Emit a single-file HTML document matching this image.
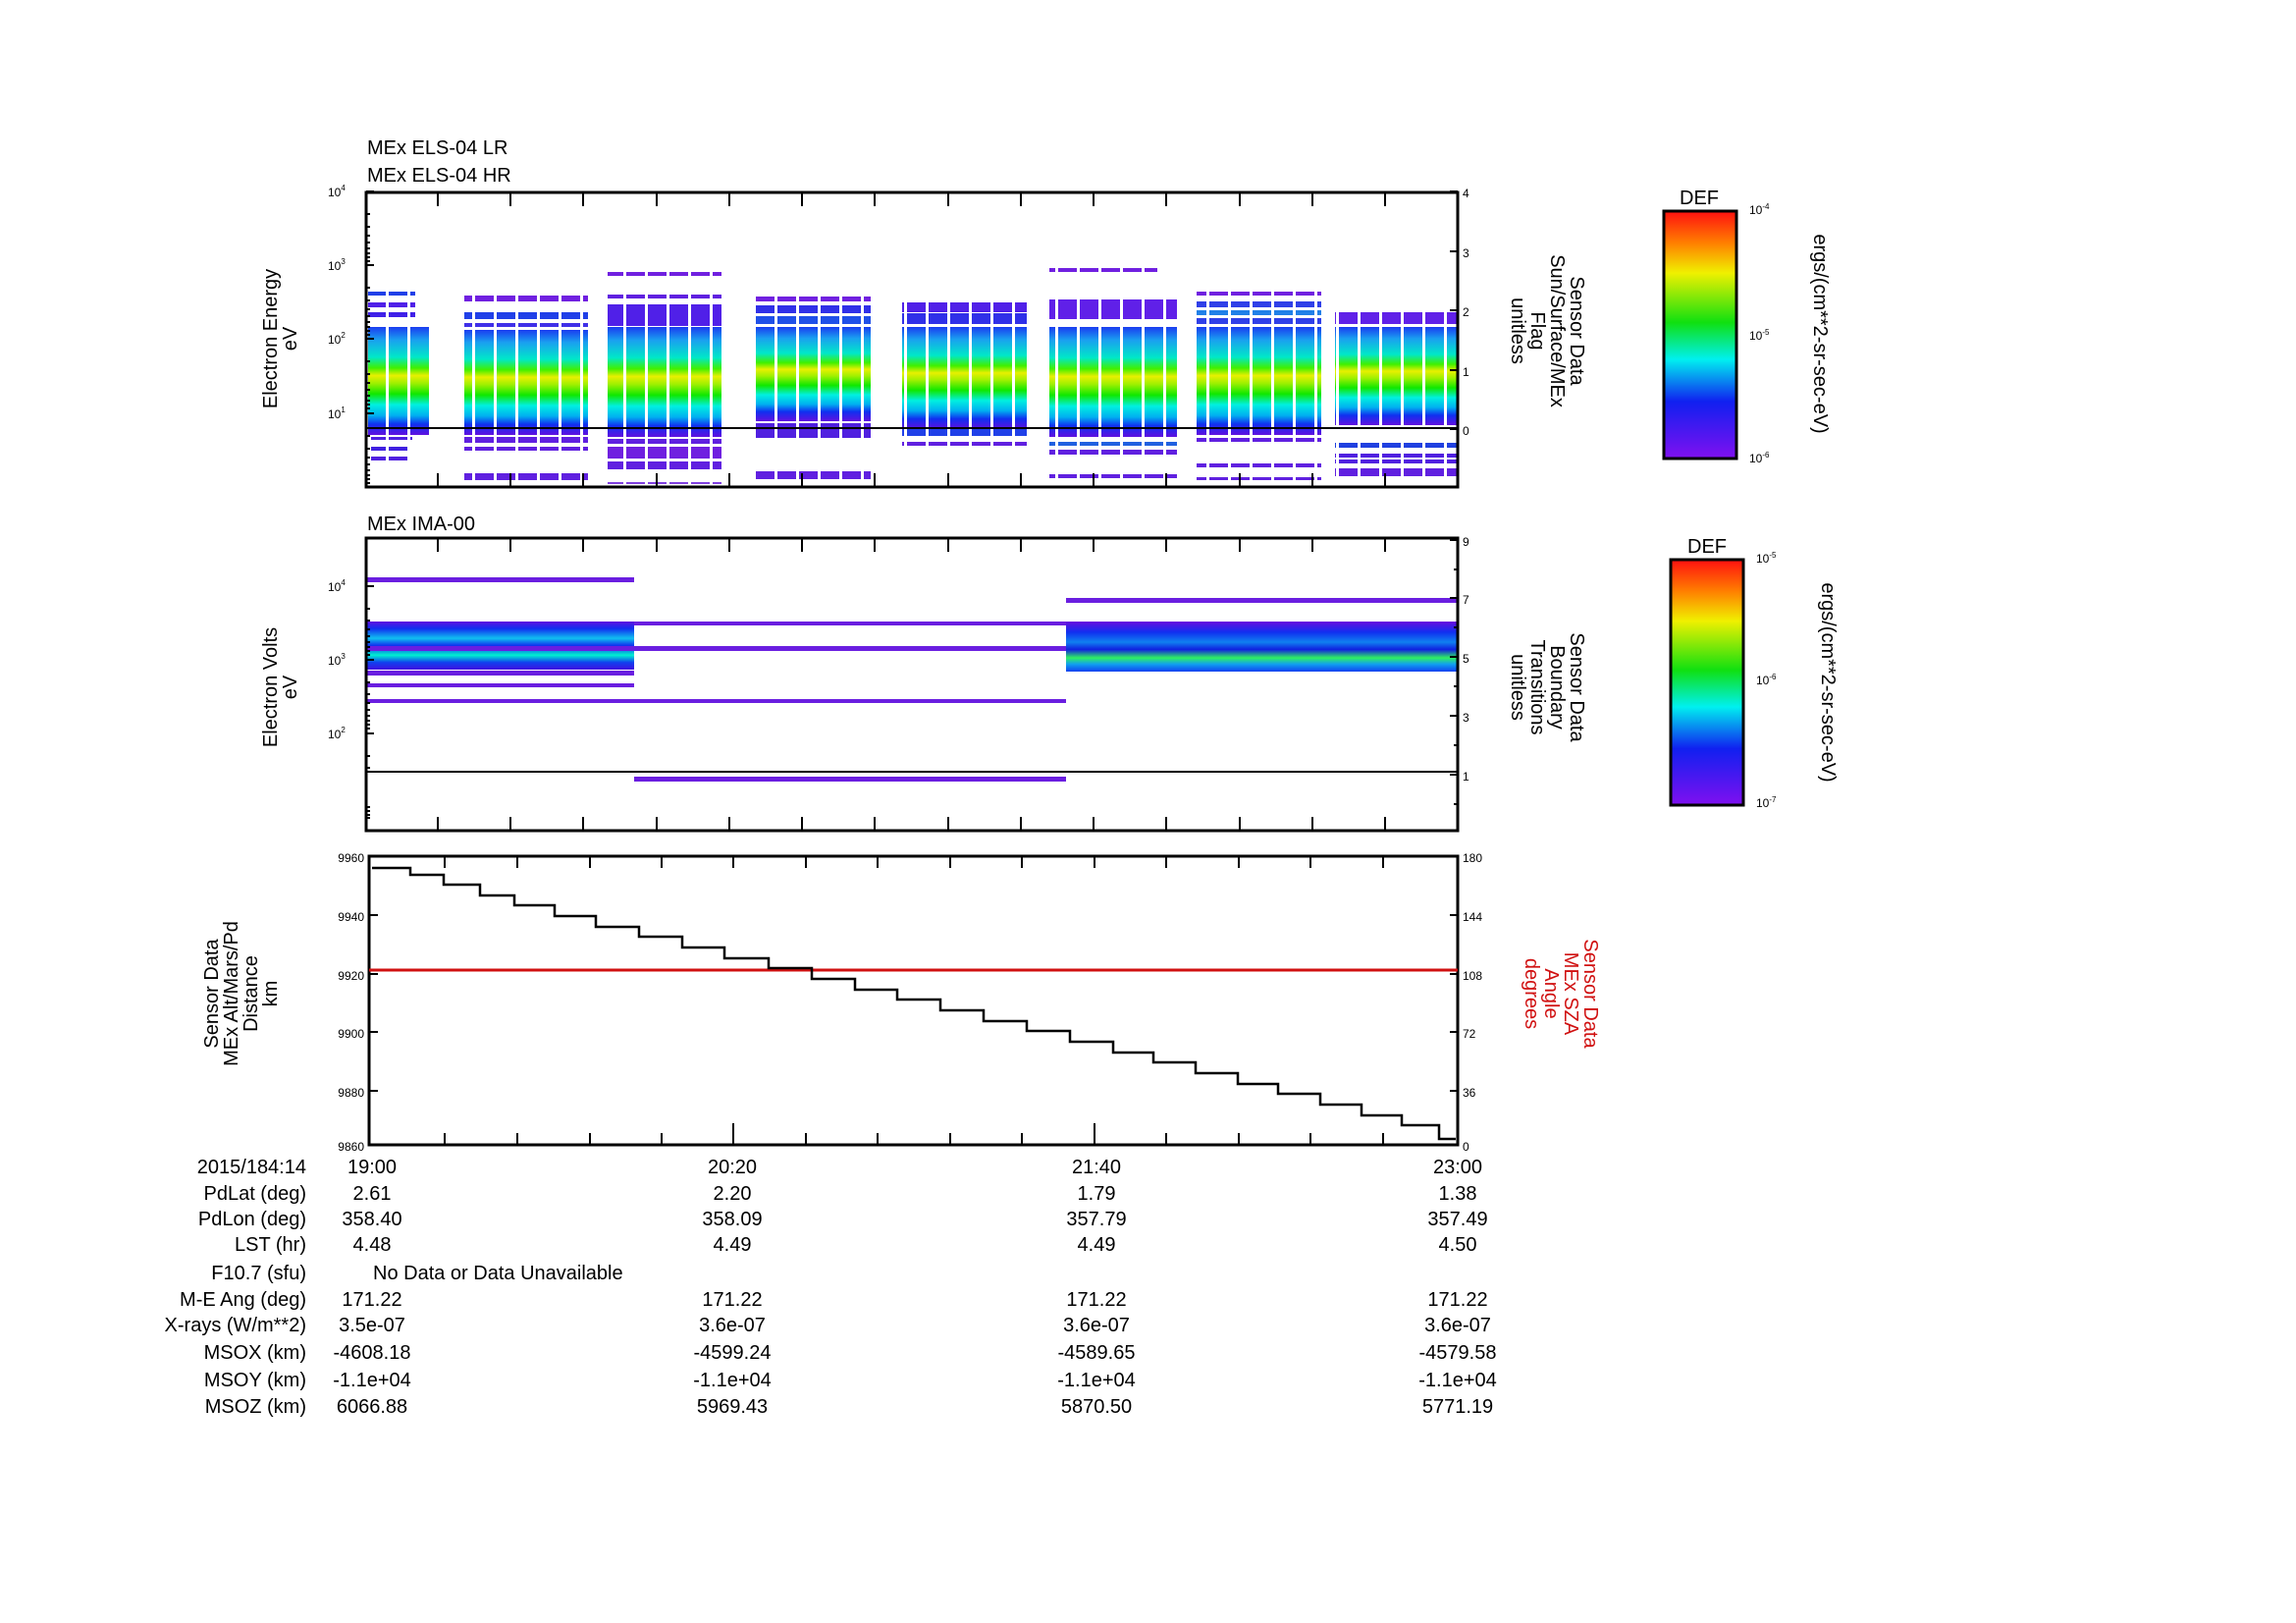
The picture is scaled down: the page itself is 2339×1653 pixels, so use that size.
<!DOCTYPE html>
<html><head><meta charset="utf-8"><style>
html,body{margin:0;padding:0;background:#fff}
svg{display:block}
text{font-family:"Liberation Sans Narrow","Liberation Sans",sans-serif;fill:#000}
.t{font-size:20px}
.s{font-size:12px}
.lab{font-family:"Liberation Sans",sans-serif;font-size:20px}
</style></head><body>
<svg width="2339" height="1653" viewBox="0 0 2339 1653" xmlns="http://www.w3.org/2000/svg">
<defs>
<linearGradient id="spec" x1="0" y1="0" x2="0" y2="1">
<stop offset="0" stop-color="#1a3cf0"/>
<stop offset="0.12" stop-color="#1aa0f0"/>
<stop offset="0.28" stop-color="#00e8c8"/>
<stop offset="0.38" stop-color="#40f000"/>
<stop offset="0.45" stop-color="#e8f000"/>
<stop offset="0.52" stop-color="#a0f000"/>
<stop offset="0.62" stop-color="#10e800"/>
<stop offset="0.72" stop-color="#00f0e0"/>
<stop offset="0.82" stop-color="#00b0f0"/>
<stop offset="0.9" stop-color="#1030f0"/>
<stop offset="1" stop-color="#6010e0"/>
</linearGradient>
<linearGradient id="cbar" x1="0" y1="0" x2="0" y2="1">
<stop offset="0" stop-color="#ff1010"/>
<stop offset="0.13" stop-color="#ff8000"/>
<stop offset="0.25" stop-color="#f0f000"/>
<stop offset="0.45" stop-color="#10e010"/>
<stop offset="0.6" stop-color="#00f0f0"/>
<stop offset="0.77" stop-color="#1020f0"/>
<stop offset="1" stop-color="#8010f0"/>
</linearGradient>
<linearGradient id="ima1" x1="0" y1="0" x2="0" y2="1">
<stop offset="0" stop-color="#6010e0"/>
<stop offset="0.15" stop-color="#1030f0"/>
<stop offset="0.35" stop-color="#10c0f0"/>
<stop offset="0.5" stop-color="#1030f0"/>
<stop offset="0.7" stop-color="#00f0d0"/>
<stop offset="0.85" stop-color="#1040f0"/>
<stop offset="1" stop-color="#4010e0"/>
</linearGradient>
<linearGradient id="ima2" x1="0" y1="0" x2="0" y2="1">
<stop offset="0" stop-color="#6010e0"/>
<stop offset="0.2" stop-color="#1030f0"/>
<stop offset="0.4" stop-color="#1080f0"/>
<stop offset="0.55" stop-color="#1020e0"/>
<stop offset="0.72" stop-color="#30f060"/>
<stop offset="0.85" stop-color="#10a0f0"/>
<stop offset="1" stop-color="#1040f0"/>
</linearGradient>
<pattern id="gaps" x="0" y="0" width="22" height="10" patternUnits="userSpaceOnUse">
<rect x="19" y="0" width="3" height="10" fill="#fff"/>
</pattern>
</defs>

<text class="t" x="374" y="157">MEx ELS-04 LR</text>
<text class="t" x="374" y="185">MEx ELS-04 HR</text>

<g id="blocks">
<rect x="375" y="333" width="65" height="110" fill="url(#spec)"/>
<rect x="375" y="308" width="48" height="5" fill="#5020e8"/><rect x="375" y="318" width="48" height="5" fill="#4020e8"/><rect x="375" y="297" width="48" height="4" fill="#2040e8"/>
<rect x="378" y="445" width="42" height="3" fill="#5020e0"/><rect x="378" y="455" width="40" height="4" fill="#4020e0"/><rect x="378" y="465" width="40" height="4" fill="#5020e0"/>
<rect x="473" y="336" width="126" height="107" fill="url(#spec)"/>
<rect x="473" y="301" width="126" height="6" fill="#7020e0"/><rect x="473" y="318" width="126" height="7" fill="#2040e8"/><rect x="473" y="329" width="126" height="4" fill="#4030e8"/>
<rect x="473" y="445" width="126" height="6" fill="#6020e0"/><rect x="473" y="455" width="126" height="4" fill="#6020e0"/><rect x="473" y="482" width="126" height="7" fill="#6020e0"/>
<rect x="619" y="333" width="116" height="112" fill="url(#spec)"/>
<rect x="619" y="277" width="116" height="4" fill="#7020e0"/><rect x="619" y="300" width="116" height="4" fill="#6020e0"/><rect x="619" y="310" width="116" height="22" fill="#5020e8"/>
<rect x="619" y="447" width="116" height="5" fill="#6020e0"/><rect x="619" y="455" width="116" height="12" fill="#7020e0"/><rect x="619" y="470" width="116" height="8" fill="#6020e0"/><rect x="619" y="491" width="116" height="2" fill="#8040e0"/>
<rect x="768" y="333" width="119" height="96" fill="url(#spec)"/>
<rect x="768" y="302" width="119" height="5" fill="#7020e0"/><rect x="768" y="311" width="119" height="8" fill="#3030e8"/><rect x="768" y="322" width="119" height="8" fill="#2050e8"/>
<rect x="768" y="431" width="119" height="15" fill="#5020e0"/><rect x="768" y="480" width="119" height="8" fill="#6020e0"/>
<rect x="919" y="333" width="127" height="104" fill="url(#spec)"/>
<rect x="919" y="308" width="127" height="10" fill="#5020e8"/><rect x="919" y="319" width="127" height="11" fill="#3030e8"/>
<rect x="919" y="437" width="127" height="7" fill="#2040e8"/><rect x="919" y="450" width="127" height="4" fill="#6020e0"/>
<rect x="1069" y="333" width="130" height="112" fill="url(#spec)"/>
<rect x="1069" y="273" width="110" height="4" fill="#7020e0"/><rect x="1069" y="305" width="130" height="20" fill="#6020e8"/>
<rect x="1069" y="450" width="130" height="4" fill="#2060e0"/><rect x="1069" y="458" width="130" height="5" fill="#6020e0"/><rect x="1069" y="483" width="130" height="4" fill="#6020e0"/>
<rect x="1219" y="333" width="127" height="110" fill="url(#spec)"/>
<rect x="1219" y="297" width="127" height="4" fill="#7020e0"/><rect x="1219" y="307" width="127" height="6" fill="#3040e8"/><rect x="1219" y="316" width="127" height="5" fill="#2080e8"/><rect x="1219" y="324" width="127" height="6" fill="#3040e8"/>
<rect x="1219" y="446" width="127" height="4" fill="#6020e0"/><rect x="1219" y="472" width="127" height="4" fill="#6020e0"/><rect x="1219" y="486" width="127" height="3" fill="#6020e0"/>
<rect x="1360" y="333" width="125" height="100" fill="url(#spec)"/>
<rect x="1360" y="318" width="125" height="12" fill="#6020e8"/>
<rect x="1360" y="451" width="125" height="5" fill="#2040e0"/><rect x="1360" y="462" width="125" height="4" fill="#5020e0"/><rect x="1360" y="468" width="125" height="4" fill="#5020e0"/><rect x="1360" y="477" width="125" height="8" fill="#6020e0"/>
</g>
<rect x="372" y="270" width="1113" height="225" fill="url(#gaps)"/>
<line x1="374" y1="436" x2="1485" y2="436" stroke="#000" stroke-width="2"/>
<rect x="373" y="196" width="1112" height="300" fill="none" stroke="#000" stroke-width="3"/>
<g stroke="#000" stroke-width="2">
<path d="M446 196v14M520 196v14M594 196v14M669 196v14M743 196v14M817 196v14M891 196v14M966 196v14M1040 196v14M1114 196v14M1188 196v14M1263 196v14M1337 196v14M1411 196v14"/>
<path d="M446 496v-14M520 496v-14M594 496v-14M669 496v-14M743 496v-14M817 496v-14M891 496v-14M966 496v-14M1040 496v-14M1114 496v-14M1188 496v-14M1263 496v-14M1337 496v-14M1411 496v-14"/>
<path d="M373 195h8M373 270h8M373 345h8M373 421h8M373 218h4M373 231h4M373 240h4M373 247h4M373 253h4M373 258h4M373 262h4M373 266h4M373 293h4M373 306h4M373 315h4M373 322h4M373 328h4M373 333h4M373 337h4M373 341h4M373 368h4M373 381h4M373 390h4M373 397h4M373 403h4M373 408h4M373 412h4M373 416h4M373 444h4M373 457h4M373 466h4M373 473h4M373 479h4M373 484h4M373 488h4M373 492h4"/>
<path d="M1485 195h-8M1485 256h-8M1485 316h-8M1485 377h-8M1485 437h-8"/>
</g>
<text class="s" x="334" y="200">10<tspan dy="-6" font-size="8">4</tspan></text>
<text class="s" x="334" y="275">10<tspan dy="-6" font-size="8">3</tspan></text>
<text class="s" x="334" y="350">10<tspan dy="-6" font-size="8">2</tspan></text>
<text class="s" x="334" y="426">10<tspan dy="-6" font-size="8">1</tspan></text>
<text class="s" x="1490" y="201">4</text><text class="s" x="1490" y="262">3</text><text class="s" x="1490" y="322">2</text><text class="s" x="1490" y="383">1</text><text class="s" x="1490" y="443">0</text>
<g class="lab" text-anchor="middle">
<text transform="translate(282,345) rotate(-90)">Electron Energy</text>
<text transform="translate(302,345) rotate(-90)">eV</text>
<text transform="translate(1600,337) rotate(90)">Sensor Data</text>
<text transform="translate(1580,337) rotate(90)">Sun/Surface/MEx</text>
<text transform="translate(1560,337) rotate(90)">Flag</text>
<text transform="translate(1540,337) rotate(90)">unitless</text>
</g>
<text class="lab" x="1731" y="208" text-anchor="middle" font-size="18">DEF</text>
<rect x="1695" y="215" width="74" height="252" fill="url(#cbar)" stroke="#000" stroke-width="3"/>
<text class="s" x="1782" y="218">10<tspan dy="-5" font-size="8">-4</tspan></text>
<text class="s" x="1782" y="346">10<tspan dy="-5" font-size="8">-5</tspan></text>
<text class="s" x="1782" y="471">10<tspan dy="-5" font-size="8">-6</tspan></text>
<text class="lab" font-size="17" text-anchor="middle" transform="translate(1848,340) rotate(90)">ergs/(cm**2-sr-sec-eV)</text>

<text class="t" x="374" y="540">MEx IMA-00</text>
<rect x="372" y="588" width="274" height="5" fill="#6a1ee0"/>
<rect x="372" y="633" width="274" height="49" fill="url(#ima1)"/>
<rect x="372" y="683" width="274" height="5" fill="#6a1ee0"/>
<rect x="372" y="696" width="274" height="4" fill="#6a1ee0"/>
<rect x="372" y="712" width="714" height="4" fill="#6a1ee0"/>
<rect x="646" y="633" width="839" height="4" fill="#6a1ee0"/>
<rect x="372" y="658" width="714" height="5" fill="#6a1ee0"/>
<rect x="646" y="791" width="440" height="5" fill="#6a1ee0"/>
<rect x="1086" y="609" width="399" height="5" fill="#6a1ee0"/>
<rect x="1086" y="634" width="399" height="50" fill="url(#ima2)"/>
<line x1="372" y1="786" x2="1485" y2="786" stroke="#000" stroke-width="2"/>
<rect x="373" y="548" width="1112" height="298" fill="none" stroke="#000" stroke-width="3"/>
<g stroke="#000" stroke-width="2">
<path d="M446 548v14M520 548v14M594 548v14M669 548v14M743 548v14M817 548v14M891 548v14M966 548v14M1040 548v14M1114 548v14M1188 548v14M1263 548v14M1337 548v14M1411 548v14"/>
<path d="M446 846v-14M520 846v-14M594 846v-14M669 846v-14M743 846v-14M817 846v-14M891 846v-14M966 846v-14M1040 846v-14M1114 846v-14M1188 846v-14M1263 846v-14M1337 846v-14M1411 846v-14"/>
<path d="M373 597h8M373 672h8M373 747h8M373 620h4M373 632h4M373 641h4M373 648h4M373 654h4M373 659h4M373 663h4M373 667h4M373 695h4M373 707h4M373 716h4M373 723h4M373 729h4M373 734h4M373 738h4M373 742h4M373 770h4M373 782h4M373 822h4M373 826h4M373 830h4M373 833h4"/>
<path d="M1485 550h-8M1485 609h-8M1485 669h-8M1485 729h-8M1485 789h-8M1485 580h-4M1485 639h-4M1485 699h-4M1485 759h-4M1485 819h-4"/>
</g>
<text class="s" x="334" y="602">10<tspan dy="-6" font-size="8">4</tspan></text>
<text class="s" x="334" y="677">10<tspan dy="-6" font-size="8">3</tspan></text>
<text class="s" x="334" y="752">10<tspan dy="-6" font-size="8">2</tspan></text>
<text class="s" x="1490" y="556">9</text><text class="s" x="1490" y="615">7</text><text class="s" x="1490" y="675">5</text><text class="s" x="1490" y="735">3</text><text class="s" x="1490" y="795">1</text>
<g class="lab" text-anchor="middle">
<text transform="translate(282,700) rotate(-90)">Electron Volts</text>
<text transform="translate(302,700) rotate(-90)">eV</text>
<text transform="translate(1600,700) rotate(90)">Sensor Data</text>
<text transform="translate(1580,700) rotate(90)">Boundary</text>
<text transform="translate(1560,700) rotate(90)">Transitions</text>
<text transform="translate(1540,700) rotate(90)">unitless</text>
</g>
<text class="lab" x="1739" y="563" text-anchor="middle" font-size="18">DEF</text>
<rect x="1702" y="570" width="74" height="250" fill="url(#cbar)" stroke="#000" stroke-width="3"/>
<text class="s" x="1789" y="573">10<tspan dy="-5" font-size="8">-5</tspan></text>
<text class="s" x="1789" y="697">10<tspan dy="-5" font-size="8">-6</tspan></text>
<text class="s" x="1789" y="822">10<tspan dy="-5" font-size="8">-7</tspan></text>
<text class="lab" font-size="17" text-anchor="middle" transform="translate(1856,695) rotate(90)">ergs/(cm**2-sr-sec-eV)</text>

<rect x="376" y="872" width="1109" height="294" fill="none" stroke="#000" stroke-width="3"/>
<line x1="376" y1="988" x2="1485" y2="988" stroke="#d01010" stroke-width="3"/>
<path d="M379 884H418V891H452V901H489V912H524V922H565V933H607V944H651V954H695V965H738V976H783V986H827V997H871V1008H914V1018H958V1029H1002V1040H1046V1050H1090V1061H1134V1072H1175V1082H1218V1093H1261V1104H1302V1114H1345V1125H1387V1136H1428V1146H1466V1160H1483" fill="none" stroke="#000" stroke-width="2.5"/>
<g stroke="#000" stroke-width="2">
<path d="M453 872v12M527 872v12M601 872v12M674 872v12M747 872v12M821 872v12M894 872v12M968 872v12M1041 872v12M1115 872v12M1188 872v12M1262 872v12M1335 872v12M1409 872v12"/>
<path d="M453 1166v-12M527 1166v-12M601 1166v-12M674 1166v-12M747 1166v-22M821 1166v-12M894 1166v-12M968 1166v-12M1041 1166v-12M1115 1166v-22M1188 1166v-12M1262 1166v-12M1335 1166v-12M1409 1166v-12"/>
<path d="M377 872h8M377 932h8M377 992h8M377 1051h8M377 1111h8M377 1166h8"/>
<path d="M1485 872h-8M1485 932h-8M1485 992h-8M1485 1051h-8M1485 1111h-8M1485 1166h-8"/>
</g>
<g class="s" text-anchor="end">
<text x="371" y="878">9960</text><text x="371" y="938">9940</text><text x="371" y="998">9920</text><text x="371" y="1057">9900</text><text x="371" y="1117">9880</text><text x="371" y="1172">9860</text>
</g>
<g class="s">
<text x="1490" y="878">180</text><text x="1490" y="938">144</text><text x="1490" y="998">108</text><text x="1490" y="1057">72</text><text x="1490" y="1117">36</text><text x="1490" y="1172">0</text>
</g>
<g class="lab" text-anchor="middle">
<text transform="translate(222,1012) rotate(-90)">Sensor Data</text>
<text transform="translate(242,1012) rotate(-90)">MEx Alt/Mars/Pd</text>
<text transform="translate(262,1012) rotate(-90)">Distance</text>
<text transform="translate(282,1012) rotate(-90)">km</text>
</g>
<g class="lab" text-anchor="middle">
<text style="fill:#d01010" transform="translate(1614,1012) rotate(90)">Sensor Data</text>
<text style="fill:#d01010" transform="translate(1594,1012) rotate(90)">MEx SZA</text>
<text style="fill:#d01010" transform="translate(1574,1012) rotate(90)">Angle</text>
<text style="fill:#d01010" transform="translate(1554,1012) rotate(90)">degrees</text>
</g>

<g class="t" text-anchor="end">
<text x="312" y="1195">2015/184:14</text>
<text x="312" y="1222">PdLat (deg)</text>
<text x="312" y="1248">PdLon (deg)</text>
<text x="312" y="1274">LST (hr)</text>
<text x="312" y="1303">F10.7 (sfu)</text>
<text x="312" y="1330">M-E Ang (deg)</text>
<text x="312" y="1356">X-rays (W/m**2)</text>
<text x="312" y="1384">MSOX (km)</text>
<text x="312" y="1412">MSOY (km)</text>
<text x="312" y="1439">MSOZ (km)</text>
</g>
<g class="t" text-anchor="middle">
<text x="379" y="1195">19:00</text><text x="746" y="1195">20:20</text><text x="1117" y="1195">21:40</text><text x="1485" y="1195">23:00</text>
<text x="379" y="1222">2.61</text><text x="746" y="1222">2.20</text><text x="1117" y="1222">1.79</text><text x="1485" y="1222">1.38</text>
<text x="379" y="1248">358.40</text><text x="746" y="1248">358.09</text><text x="1117" y="1248">357.79</text><text x="1485" y="1248">357.49</text>
<text x="379" y="1274">4.48</text><text x="746" y="1274">4.49</text><text x="1117" y="1274">4.49</text><text x="1485" y="1274">4.50</text>
<text x="379" y="1330">171.22</text><text x="746" y="1330">171.22</text><text x="1117" y="1330">171.22</text><text x="1485" y="1330">171.22</text>
<text x="379" y="1356">3.5e-07</text><text x="746" y="1356">3.6e-07</text><text x="1117" y="1356">3.6e-07</text><text x="1485" y="1356">3.6e-07</text>
<text x="379" y="1384">-4608.18</text><text x="746" y="1384">-4599.24</text><text x="1117" y="1384">-4589.65</text><text x="1485" y="1384">-4579.58</text>
<text x="379" y="1412">-1.1e+04</text><text x="746" y="1412">-1.1e+04</text><text x="1117" y="1412">-1.1e+04</text><text x="1485" y="1412">-1.1e+04</text>
<text x="379" y="1439">6066.88</text><text x="746" y="1439">5969.43</text><text x="1117" y="1439">5870.50</text><text x="1485" y="1439">5771.19</text>
</g>
<text class="t" x="380" y="1303">No Data or Data Unavailable</text>
</svg>
</body></html>
